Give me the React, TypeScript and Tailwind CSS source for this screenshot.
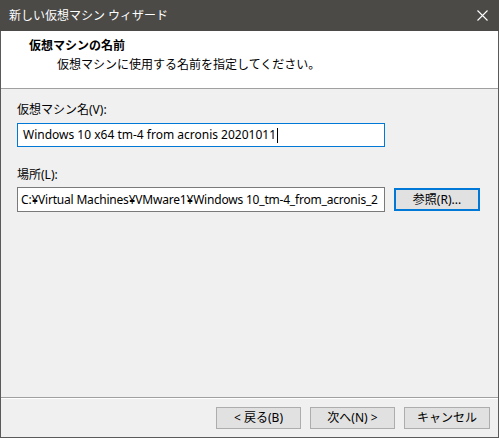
export default function App() {
  const font = { fontFamily: '"Noto Sans", "Noto Sans CJK JP", sans-serif' }
  return (
    <div
      className="w-[499px] h-[438px] flex flex-col bg-[#f0f0f0] border-x border-b border-[#5a5a5a] text-[12px] text-black"
      style={font}
    >
      {/* title bar */}
      <div className="h-[31px] shrink-0 bg-[#4b4a47] -mx-px flex items-center justify-between pl-[9px] pr-[11px] text-white">
        <span className="leading-none">新しい仮想マシン ウィザード</span>
        <svg width="11" height="11" viewBox="0 0 11 11">
          <path d="M0.5 0.5 L10.5 10.5 M10.5 0.5 L0.5 10.5" stroke="#ffffff" strokeWidth="1.1" />
        </svg>
      </div>

      {/* header */}
      <div className="h-[58px] shrink-0 bg-white border-b border-[#a0a0a0] pl-[28px] pt-[7px] flex flex-col">
        <span className="font-bold leading-[16px]">仮想マシンの名前</span>
        <span className="pl-[28px] mt-[3px] leading-[16px]">仮想マシンに使用する名前を指定してください。</span>
      </div>

      {/* body */}
      <div className="flex-1 flex flex-col px-[16px] pt-[13px]">
        <span className="leading-[16px]">仮想マシン名(V):</span>
        <div className="mt-[5px] w-[368px] h-[24px] bg-white border border-[#0078d7] flex items-center px-[5px]">
          <span className="whitespace-nowrap leading-none">Windows 10 x64 tm-4 from acronis 20201011</span>
          <span className="w-px h-[15px] bg-black ml-[1px]" />
        </div>

        <span className="mt-[20px] leading-[16px]">場所(L):</span>
        <div className="mt-[4px] flex items-center gap-[9px]">
          <div className="w-[368px] h-[25px] bg-white border border-[#7a7a7a] flex items-center pl-[3px] overflow-hidden">
            <span className="whitespace-nowrap leading-none tracking-[-0.2px]">C:¥Virtual Machines¥VMware1¥Windows 10_tm-4_from_acronis_2</span>
          </div>
          <button className="w-[86px] h-[23px] bg-[#e1e1e1] border-2 border-[#0078d7] flex items-center justify-center leading-none">
            参照(R)...
          </button>
        </div>
      </div>

      {/* footer */}
      <div className="h-[40px] shrink-0 border-t border-[#a0a0a0]">
        <div className="h-full border-t border-white flex justify-end items-start gap-[9px] pr-[8px] pt-[8px]">
          <button className="w-[85px] h-[22px] bg-[#e1e1e1] border border-[#adadad] flex items-center justify-center leading-none">
            &lt; 戻る(B)
          </button>
          <button className="w-[85px] h-[22px] bg-[#e1e1e1] border border-[#adadad] flex items-center justify-center leading-none">
            次へ(N) &gt;
          </button>
          <button className="w-[86px] h-[22px] bg-[#e1e1e1] border border-[#adadad] flex items-center justify-center leading-none">
            キャンセル
          </button>
        </div>
      </div>
    </div>
  )
}
